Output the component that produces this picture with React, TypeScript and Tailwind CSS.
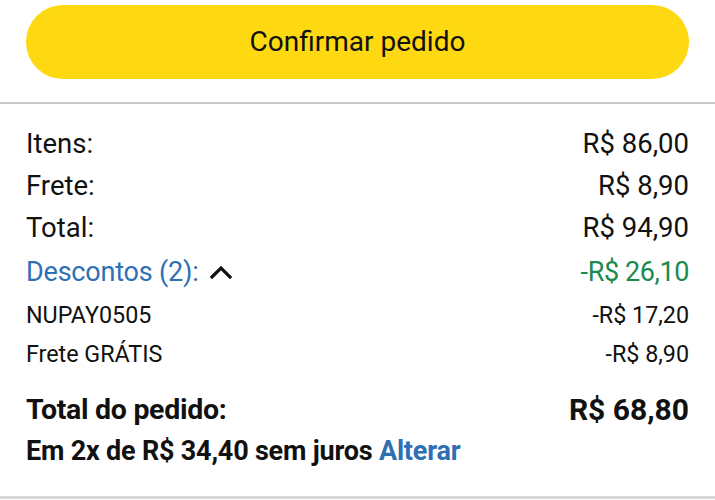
import React from "react";

function Row({
  label,
  value,
  className,
}: {
  label: React.ReactNode;
  value: React.ReactNode;
  className: string;
}) {
  return (
    <div className={`flex items-center justify-between ${className}`}>
      <div className="flex items-center">{label}</div>
      <div>{value}</div>
    </div>
  );
}

export default function App() {
  return (
    <div className="w-[715px] h-[500px] bg-white overflow-hidden text-[#111111] font-['Roboto',sans-serif]">
      <div className="px-[26px] pt-[5px]">
        <button className="w-full h-[74px] rounded-full bg-[#fed811] flex items-center justify-center text-[28px] text-[#111111] font-['Roboto',sans-serif]">
          Confirmar pedido
        </button>
      </div>
      <div className="mt-[23px] h-[2px] bg-[#c9c9c9]" />
      <div className="px-[26px] pt-[18px]">
        <Row
          className="h-[43px] text-[27.5px] leading-[43px]"
          label="Itens:"
          value="R$ 86,00"
        />
        <Row
          className="h-[42px] text-[27.5px] leading-[42px]"
          label="Frete:"
          value="R$ 8,90"
        />
        <Row
          className="h-[42px] text-[27.5px] leading-[42px]"
          label="Total:"
          value="R$ 94,90"
        />
        <Row
          className="h-[46px] text-[27px] leading-[46px]"
          label={
            <>
              <span className="text-[#2f6fb3] tracking-[-0.2px]">Descontos (2):</span>
              <svg
                className="ml-[11px]"
                width="22"
                height="14"
                viewBox="0 0 22 14"
                fill="none"
              >
                <path
                  d="M2 12 L11 3 L20 12"
                  stroke="#111111"
                  strokeWidth="3.2"
                  strokeLinecap="square"
                />
              </svg>
            </>
          }
          value={<span className="text-[#1a8a4e] tracking-[-0.4px]">-R$ 26,10</span>}
        />
        <Row
          className="h-[40px] text-[23.3px] leading-[40px]"
          label="NUPAY0505"
          value="-R$ 17,20"
        />
        <Row
          className="h-[38px] text-[23.3px] leading-[38px]"
          label="Frete GRÁTIS"
          value="-R$ 8,90"
        />
        <Row
          className="mt-[16px] h-[42px] text-[28.5px] leading-[42px] font-bold tracking-[-0.3px]"
          label="Total do pedido:"
          value={<span className="text-[30px] tracking-[0px]">R$ 68,80</span>}
        />
        <div className="h-[40px] leading-[40px] text-[27px] font-bold tracking-[-0.2px]">
          Em 2x de R$ 34,40 sem juros{" "}
          <span className="text-[#2f6fb3]">Alterar</span>
        </div>
      </div>
      <div className="mt-[25px] h-[3px] bg-[#d6d6d6]" />
    </div>
  );
}
